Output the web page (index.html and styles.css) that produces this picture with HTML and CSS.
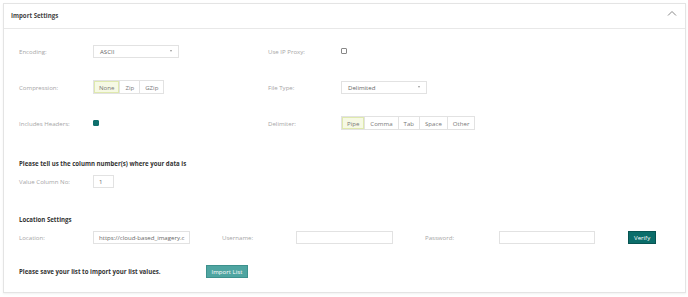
FILE: index.html
```html
<!DOCTYPE html>
<html lang="en">
<head>
  <meta charset="UTF-8">
  <title>Import Settings</title>
  <link rel="stylesheet" href="styles.css">
</head>
<body>
  <div class="panel">
    <div class="panel-head">
      <span class="panel-title">Import Settings</span>
      <svg class="chevron" width="10" height="6" viewBox="0 0 10 6">
        <polyline points="1,5.5 5,1.5 9,5.5" />
      </svg>
    </div>

    <div class="panel-body">
      <!-- main options -->
      <div class="opt-grid">
        <div class="lbl">Encoding:</div>
        <div class="ctl"><div class="select">ASCII<span class="caret"></span></div></div>
        <div class="lbl">Use IP Proxy:</div>
        <div class="ctl"><span class="check"></span></div>

        <div class="lbl">Compression:</div>
        <div class="ctl">
          <div class="btn-group">
            <span class="seg on">None</span><span class="seg">Zip</span><span class="seg">GZip</span>
          </div>
        </div>
        <div class="lbl">File Type:</div>
        <div class="ctl"><div class="select">Delimited<span class="caret"></span></div></div>

        <div class="lbl">Includes Headers:</div>
        <div class="ctl"><span class="check checked"></span></div>
        <div class="lbl">Delimiter:</div>
        <div class="ctl">
          <div class="btn-group">
            <span class="seg on">Pipe</span><span class="seg">Comma</span><span class="seg">Tab</span><span class="seg">Space</span><span class="seg">Other</span>
          </div>
        </div>
      </div>

      <!-- column number -->
      <div class="section-title col-title">Please tell us the column number(s) where your data is</div>
      <div class="line">
        <div class="lbl">Value Column No:</div>
        <div class="input small">1</div>
      </div>

      <!-- location -->
      <div class="section-title loc-title">Location Settings</div>
      <div class="line loc">
        <div class="lbl">Location:</div>
        <div class="input">https://cloud-based_imagery.c</div>
        <div class="lbl">Username:</div>
        <div class="input"></div>
        <div class="lbl">Password:</div>
        <div class="input last"></div>
        <button class="btn verify">Verify</button>
      </div>

      <div class="line save">
        <div class="section-title">Please save your list to import your list values.</div>
        <button class="btn import">Import List</button>
      </div>
    </div>
  </div>
</body>
</html>
```

FILE: styles.css
```css
body {
  margin: 0;
  background: #fff;
  font-family: "Open Sans", "Liberation Sans", sans-serif;
  font-size: 6.1px;
  color: #999;
}

.panel {
  margin: 3px 2px 3px 3px;
  height: 290px;
  box-sizing: border-box;
  border: 1px solid #e4e4e4;
  box-shadow: 0 1px 2px rgba(0,0,0,0.06);
}

.panel-head {
  height: 24px;
  padding: 0 8px 0 7px;
  display: flex;
  align-items: center;
  justify-content: space-between;
  border-bottom: 1px solid #e8e8e8;
}
.panel-title {
  font-weight: bold;
  color: #444;
  margin-top: -2px;
}
.chevron {
  margin-top: -6px;
}
.chevron polyline {
  fill: none;
  stroke: #888;
  stroke-width: 1;
}

.panel-body {
  padding: 4px 0 0 15px;
}

/* first three rows: label / control / label / control */
.opt-grid {
  display: grid;
  grid-template-columns: 74px 175px 73px 1fr;
  grid-auto-rows: 36px;
  align-items: center;
}

.lbl {
  color: #a6a6a6;
}

.select {
  width: 86px;
  height: 13px;
  box-sizing: border-box;
  border: 1px solid #e2e2e2;
  padding: 0 6px;
  display: flex;
  align-items: center;
  justify-content: space-between;
  color: #666;
}
.caret {
  width: 0;
  height: 0;
  border-left: 1.5px solid transparent;
  border-right: 1.5px solid transparent;
  border-top: 2px solid #999;
}

.check {
  display: block;
  width: 6px;
  height: 6px;
  box-sizing: border-box;
  border: 1px solid #888;
  border-radius: 1px;
}
.check.checked {
  background: #0e6f6c;
  border-color: #0e6f6c;
}

.btn-group {
  display: inline-flex;
  border: 1px solid #e2e2e2;
  height: 14px;
  box-sizing: border-box;
}
.seg {
  padding: 0 5px;
  display: flex;
  align-items: center;
  color: #777;
  border-left: 1px solid #e2e2e2;
}
.seg:first-child {
  border-left: none;
}
.seg.on {
  background: #f6f9e4;
  box-shadow: inset 0 0 0 1px #dfe9ae;
}

.section-title {
  font-weight: bold;
  color: #333;
}
.col-title {
  margin-top: 18px;
}
.loc-title {
  margin-top: 27px;
}

.line {
  display: flex;
  align-items: center;
}
.line > .lbl {
  width: 74px;
  flex: none;
}
.col-title + .line {
  margin-top: 7px;
}

.input {
  width: 97px;
  height: 13px;
  box-sizing: border-box;
  border: 1px solid #e2e2e2;
  padding: 0 5px;
  color: #666;
  display: flex;
  align-items: center;
  white-space: nowrap;
  overflow: hidden;
  flex: none;
}
.input.small {
  width: 21px;
}

.loc {
  margin-top: 7px;
}
.loc .input {
  margin-right: 32px;
}
.loc .input.last {
  width: 96px;
  margin-right: 33px;
}

.btn {
  font-family: inherit;
  font-size: 6.1px;
  color: #fff;
  border: none;
  height: 13px;
  padding: 0 5px;
  cursor: pointer;
}
.verify {
  background: #0b6d6a;
  border: 1px solid #075452;
}
.import {
  background: #4fa5a1;
  border: 1px solid #3d918d;
  margin-left: 45px;
}

.save {
  margin-top: 21px;
}
```
